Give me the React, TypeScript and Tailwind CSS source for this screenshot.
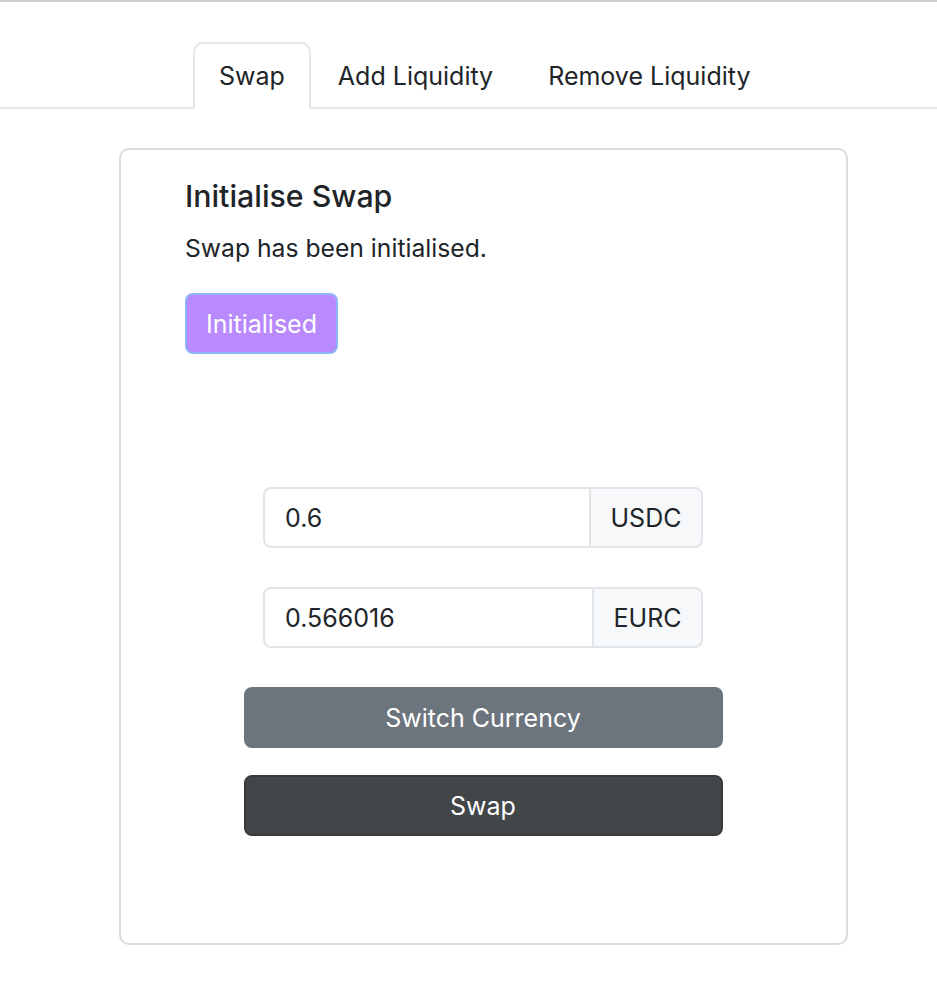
import React from "react";

export default function App() {
  const font = { fontFamily: "Inter, 'Liberation Sans', sans-serif" };
  return (
    <div className="min-h-[1000px] w-[937px] bg-white border-t-2 border-[#cfcfcf] text-[#212529]" style={font}>
      <div className="pt-[40px] border-b-2 border-[#e3e6ea] flex pl-[193px]">
        <div className="-mb-[2px] px-[24px] pt-[2px] h-[67px] flex items-center text-[25px] border-2 border-[#e3e6ea] border-b-white rounded-t-[10px] bg-white">
          Swap
        </div>
        <div className="-mb-[2px] px-[25px] pt-[2px] h-[67px] flex items-center text-[25px] border-2 border-transparent">
          Add Liquidity
        </div>
        <div className="-mb-[2px] px-[26px] pt-[2px] h-[67px] flex items-center text-[25px] border-2 border-transparent">
          Remove Liquidity
        </div>
      </div>

      <div className="ml-[119px] mt-[39px] w-[729px] h-[797px] border-2 border-[#dcdcdc] rounded-[10px] pt-[27px]">
        <div className="pl-[64px]">
          <h5 className="text-[30.3px] font-medium leading-[39px] mb-[13px]">Initialise Swap</h5>
          <p className="text-[24.7px] leading-[39px] mb-[25px]">Swap has been initialised.</p>
          <button className="h-[61px] px-[19px] pt-[2px] rounded-[8px] bg-[#b88afd] border-2 border-[#8db5f8] text-white text-[25px]">
            Initialised
          </button>
        </div>

        <div className="flex flex-col items-center mt-[133px]">
          <div className="flex w-[440px] h-[61px] mr-[1px]">
            <div className="flex-1 flex items-center pl-[20px] pt-[3px] border-2 border-[#e1e4e8] rounded-l-[8px] text-[25px]">0.6</div>
            <div className="w-[112px] flex items-center justify-center pt-[3px] border-2 border-l-0 border-[#e1e4e8] rounded-r-[8px] bg-[#f7f8f9] text-[25px]">USDC</div>
          </div>
          <div className="flex w-[440px] h-[61px] mt-[39px] mr-[1px]">
            <div className="flex-1 flex items-center pl-[20px] pt-[3px] border-2 border-[#e1e4e8] rounded-l-[8px] text-[25px]">0.566016</div>
            <div className="w-[109px] flex items-center justify-center pt-[3px] border-2 border-l-0 border-[#e1e4e8] rounded-r-[8px] bg-[#f7f8f9] text-[25px]">EURC</div>
          </div>
          <button className="mt-[39px] w-[479px] h-[61px] pt-[2px] rounded-[8px] bg-[#6c757d] border-2 border-[#6c757d] text-white text-[25px] mr-[1px]">
            Switch Currency
          </button>
          <button className="mt-[27px] w-[479px] h-[61px] pt-[2px] rounded-[8px] bg-[#424649] border-2 border-[#373b3e] text-white text-[25px] mr-[1px]">
            Swap
          </button>
        </div>
      </div>
    </div>
  );
}
